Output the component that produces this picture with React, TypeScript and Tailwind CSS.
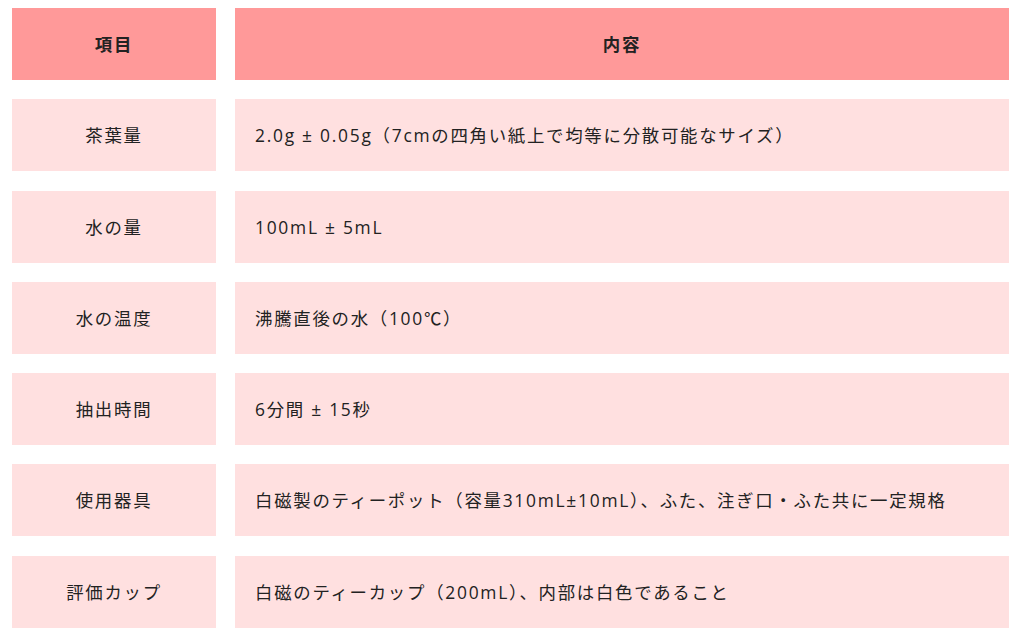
const ROWS: [string, string][] = [
  ["茶葉量", "2.0g ± 0.05g（7cmの四角い紙上で均等に分散可能なサイズ）"],
  ["水の量", "100mL ± 5mL"],
  ["水の温度", "沸騰直後の水（100℃）"],
  ["抽出時間", "6分間 ± 15秒"],
  ["使用器具", "白磁製のティーポット（容量310mL±10mL）、ふた、注ぎ口・ふた共に一定規格"],
  ["評価カップ", "白磁のティーカップ（200mL）、内部は白色であること"],
];

export default function App() {
  return (
    <div
      className="w-[1024px] h-[639px] bg-white pl-[12px] pr-[15px] pt-[8px] text-[17.4px] tracking-[0.1em] text-[#222]"
      style={{ fontFamily: '"Open Sans", "Noto Sans CJK JP", sans-serif' }}
    >
      <div className="grid grid-cols-[204px_1fr] gap-x-[19px] gap-y-[19.3px]">
        <div className="h-[72px] bg-[#ff9999] flex items-center justify-center font-bold">
          項目
        </div>
        <div className="h-[72px] bg-[#ff9999] flex items-center justify-center font-bold">
          内容
        </div>
        {ROWS.map(([k, v]) => (
          <>
            <div key={k + "-k"} className="h-[72px] bg-[#ffe0e0] flex items-center justify-center">
              {k}
            </div>
            <div key={k + "-v"} className="h-[72px] bg-[#ffe0e0] flex items-center pl-[20px]">
              {v}
            </div>
          </>
        ))}
      </div>
    </div>
  );
}
